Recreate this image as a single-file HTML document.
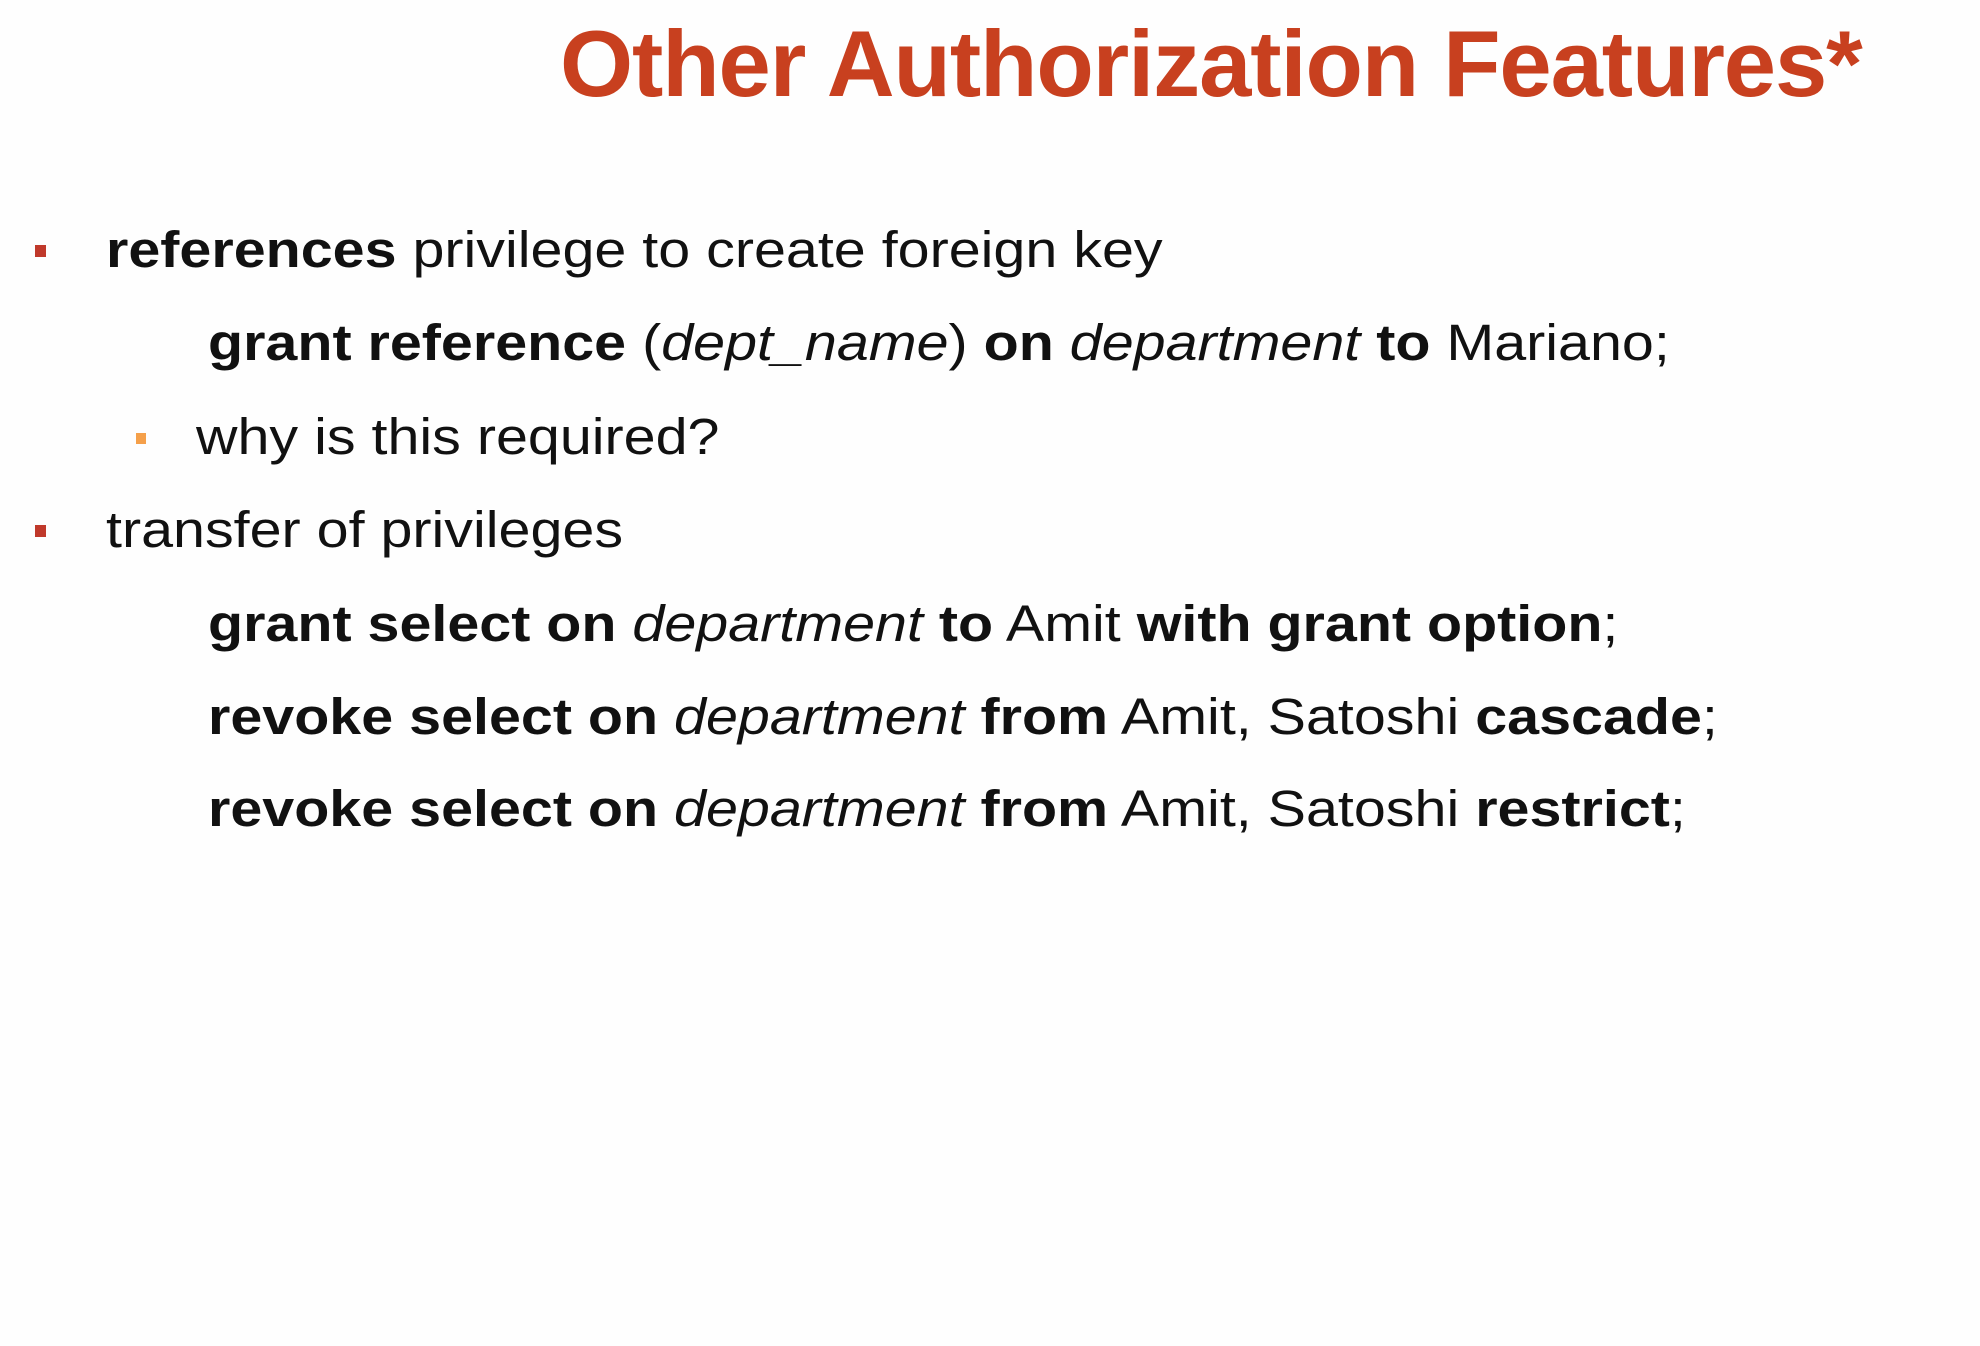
<!DOCTYPE html>
<html><head><style>
body{margin:0;width:1980px;height:1346px;background:#fefefe;font-family:"Liberation Sans",Arial,sans-serif;position:relative;overflow:hidden;color:#111}
.t{position:absolute;left:560px;top:10px;font-size:94px;font-weight:bold;color:#c8401f;white-space:nowrap;letter-spacing:-1.1px}
.l{position:absolute;font-size:51px;white-space:nowrap;line-height:60px;transform:scaleX(1.126);transform-origin:0 0}
.b{position:absolute;width:11px;height:12px;background:#c0392b}
.o{background:#f5a04a;width:10px;height:11px}
</style></head><body>
<div class="t">Other Authorization Features*</div>
<div class="b" style="left:35px;top:245px"></div>
<div class="l" style="left:106px;top:220px"><b>references</b> privilege to create foreign key</div>
<div class="l" style="left:208px;top:313px"><b>grant reference</b> (<i>dept_name</i>) <b>on</b> <i>department</i> <b>to</b> Mariano;</div>
<div class="b o" style="left:136px;top:433px"></div>
<div class="l" style="left:196px;top:407px">why is this required?</div>
<div class="b" style="left:35px;top:525px"></div>
<div class="l" style="left:106px;top:500px">transfer of privileges</div>
<div class="l" style="left:208px;top:594px"><b>grant select on</b> <i>department</i> <b>to</b> Amit <b>with grant option</b>;</div>
<div class="l" style="left:208px;top:687px"><b>revoke select on</b> <i>department</i> <b>from</b> Amit, Satoshi <b>cascade</b>;</div>
<div class="l" style="left:208px;top:779px"><b>revoke select on</b> <i>department</i> <b>from</b> Amit, Satoshi <b>restrict</b>;</div>
</body></html>
